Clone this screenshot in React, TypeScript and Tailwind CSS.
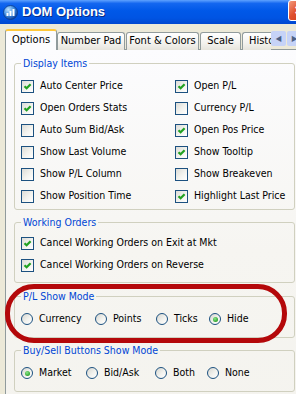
import type { ReactNode } from 'react';

const UI_FONT = "font-['DejaVu_Sans_Condensed','Liberation_Sans',sans-serif]";

type Check = { label: string; checked: boolean };
type Choice = { label: string; checked: boolean; width: string };

const displayItems: Check[] = [
  { label: 'Auto Center Price', checked: true },
  { label: 'Open P/L', checked: true },
  { label: 'Open Orders Stats', checked: true },
  { label: 'Currency P/L', checked: false },
  { label: 'Auto Sum Bid/Ask', checked: false },
  { label: 'Open Pos Price', checked: true },
  { label: 'Show Last Volume', checked: false },
  { label: 'Show Tooltip', checked: true },
  { label: 'Show P/L Column', checked: false },
  { label: 'Show Breakeven', checked: false },
  { label: 'Show Position Time', checked: false },
  { label: 'Highlight Last Price', checked: true },
];

const workingOrders: Check[] = [
  { label: 'Cancel Working Orders on Exit at Mkt', checked: true },
  { label: 'Cancel Working Orders on Reverse', checked: true },
];

const plModes: Choice[] = [
  { label: 'Currency', checked: false, width: 'w-[74px]' },
  { label: 'Points', checked: false, width: 'w-[61px]' },
  { label: 'Ticks', checked: false, width: 'w-[53px]' },
  { label: 'Hide', checked: true, width: 'w-[60px]' },
];

const buttonModes: Choice[] = [
  { label: 'Market', checked: true, width: 'w-[65px]' },
  { label: 'Bid/Ask', checked: false, width: 'w-[69px]' },
  { label: 'Both', checked: false, width: 'w-[52px]' },
  { label: 'None', checked: false, width: 'w-[60px]' },
];

function CheckBox({ checked }: { checked: boolean }) {
  return (
    <span className="flex h-[13px] w-[13px] shrink-0 items-center justify-center border border-[#1C5180] bg-[linear-gradient(135deg,#DCDCD7_0%,#F3F3EF_55%,#FFFFFF_100%)]">
      {checked && (
        <svg width="9" height="9" viewBox="0 0 9 9">
          <path d="M1.5 4.2 L3.6 6.3 L7.6 2.2" stroke="#21A121" strokeWidth="2.2" fill="none" />
        </svg>
      )}
    </span>
  );
}

function Radio({ checked }: { checked: boolean }) {
  return (
    <span className="flex h-[12px] w-[12px] shrink-0 items-center justify-center rounded-full border border-[#1C5180] bg-[linear-gradient(135deg,#D6D6D0_0%,#F2F2EE_55%,#FFFFFF_100%)]">
      {checked && (
        <span className="h-[5px] w-[5px] rounded-full bg-[radial-gradient(circle_at_40%_35%,#8BE68B_0%,#2FA52F_70%,#1E8A1E_100%)]" />
      )}
    </span>
  );
}

function Group({ title, className, children }: { title: string; className: string; children: ReactNode }) {
  return (
    <fieldset className={`w-[281px] rounded-[3px] border border-[#D0D0BF] ${className}`}>
      <legend className="ml-[6px] px-[2px] leading-[13px] text-[#0046D5]">{title}</legend>
      {children}
    </fieldset>
  );
}

function CheckRow({ item }: { item: Check }) {
  return (
    <div className="flex h-[22px] items-center gap-[6px] whitespace-nowrap">
      <CheckBox checked={item.checked} />
      <span>{item.label}</span>
    </div>
  );
}

function RadioRow({ items }: { items: Choice[] }) {
  return (
    <div className="flex h-[22px] items-center pl-[6px]">
      {items.map((c) => (
        <div key={c.label} className={`flex shrink-0 items-center gap-[6px] whitespace-nowrap ${c.width}`}>
          <Radio checked={c.checked} />
          <span>{c.label}</span>
        </div>
      ))}
    </div>
  );
}

function Tab({ label, width, className = '' }: { label: string; width: string; className?: string }) {
  return (
    <div
      className={`flex h-[18px] shrink-0 items-center justify-center rounded-t-[3px] border border-b-0 border-[#919B9C] bg-[linear-gradient(180deg,#FFFFFF_0%,#F3F2EE_60%,#E6E4DC_100%)] ${width} ${className}`}
    >
      {label}
    </div>
  );
}

function AppIcon() {
  return (
    <svg width="15" height="15" viewBox="0 0 15 15">
      <defs>
        <radialGradient id="ico" cx="35%" cy="30%" r="75%">
          <stop offset="0%" stopColor="#BFE3FF" />
          <stop offset="55%" stopColor="#3C8BE0" />
          <stop offset="100%" stopColor="#0E3E9C" />
        </radialGradient>
      </defs>
      <circle cx="7.5" cy="7.5" r="7" fill="url(#ico)" stroke="#0A3A8C" strokeWidth="0.8" />
      <rect x="3.5" y="8" width="2" height="3" fill="#FFFFFF" />
      <rect x="6.5" y="6" width="2" height="5" fill="#FFFFFF" />
      <rect x="9.5" y="4" width="2" height="7" fill="#FFFFFF" />
    </svg>
  );
}

export default function App() {
  return (
    <div className={`relative h-[394px] w-[296px] overflow-hidden bg-[#ECE9D8] text-[10.5px] text-black ${UI_FONT}`}>
      {/* Title bar */}
      <div className="flex h-[24px] items-center bg-[linear-gradient(180deg,#5FA2FF_0%,#1467F0_14%,#0058E8_45%,#0054E3_75%,#0047D0_100%)] pl-[3px]">
        <AppIcon />
        <span className="ml-[4px] font-['Liberation_Sans',sans-serif] text-[13px] font-bold text-white [text-shadow:1px_1px_0_#0A2C85]">
          DOM Options
        </span>
        <div className="ml-auto mr-[-13px] mt-[-3px] flex h-[21px] w-[21px] shrink-0 items-center justify-center rounded-[3px] border border-white bg-[linear-gradient(135deg,#F29A7E_0%,#E0502E_45%,#C8381A_100%)] font-['Liberation_Sans',sans-serif] text-[14px] font-bold text-white">
          ×
        </div>
      </div>

      {/* Tabs */}
      <div className="mt-[5px] flex h-[21px] items-end pl-[5px] text-[11px]">
        <div className="relative z-10 flex h-[21px] w-[52px] shrink-0 items-center justify-center rounded-t-[3px] border-x border-t-2 border-x-[#919B9C] border-t-[#FFC83C] bg-[#FCFCFE] pb-[1px]">
          Options
        </div>
        <Tab label="Number Pad" width="w-[68px]" />
        <Tab label="Font & Colors" width="w-[73px]" className="ml-[1px]" />
        <Tab label="Scale" width="w-[41px]" className="ml-[1px]" />
        <div className="ml-[1px] flex h-[18px] w-[29px] shrink-0 items-center overflow-hidden rounded-tl-[3px] border-l border-t border-[#919B9C] bg-[linear-gradient(180deg,#FFFFFF_0%,#F3F2EE_60%,#E6E4DC_100%)] pl-[6px] whitespace-nowrap">
          Histo
        </div>
        <div className="mb-[4px] flex h-[15px] shrink-0 gap-[1px]">
          <div className="flex w-[15px] items-center justify-center rounded-[2px] bg-[#C6D3F7] text-[8px] text-[#4D6185]">◀</div>
          <div className="flex w-[15px] items-center justify-center rounded-[2px] bg-[#C6D3F7] text-[8px] text-[#4D6185]">▶</div>
        </div>
      </div>

      {/* Tab page */}
      <div className="-mt-px ml-[5px] h-[400px] border-l border-t border-[#919B9C] bg-[linear-gradient(180deg,#FCFCFE_0%,#F6F5F1_50%,#F4F3EE_100%)] pl-[8px]">
        <Group title="Display Items" className="mt-[7px] pb-[2px]">
          <div className="grid grid-cols-[154px_1fr] pl-[6px] pt-[5px]">
            {displayItems.map((item) => (
              <CheckRow key={item.label} item={item} />
            ))}
          </div>
        </Group>

        <Group title="Working Orders" className="mt-[6px] pb-[6px]">
          <div className="pl-[6px] pt-[3px]">
            {workingOrders.map((item) => (
              <CheckRow key={item.label} item={item} />
            ))}
          </div>
        </Group>

        <Group title="P/L Show Mode" className="mt-[7px] pb-[7px]">
          <div className="pt-[5px]">
            <RadioRow items={plModes} />
          </div>
        </Group>

        <Group title="Buy/Sell Buttons Show Mode" className="mt-[6px] pb-[7px]">
          <div className="pt-[5px]">
            <RadioRow items={buttonModes} />
          </div>
        </Group>
      </div>

      {/* red annotation ring */}
      <div className="pointer-events-none absolute left-[5px] top-[284px] h-[59px] w-[282px] rounded-[29px] border-[5px] border-[#B4080A]" />
    </div>
  );
}
